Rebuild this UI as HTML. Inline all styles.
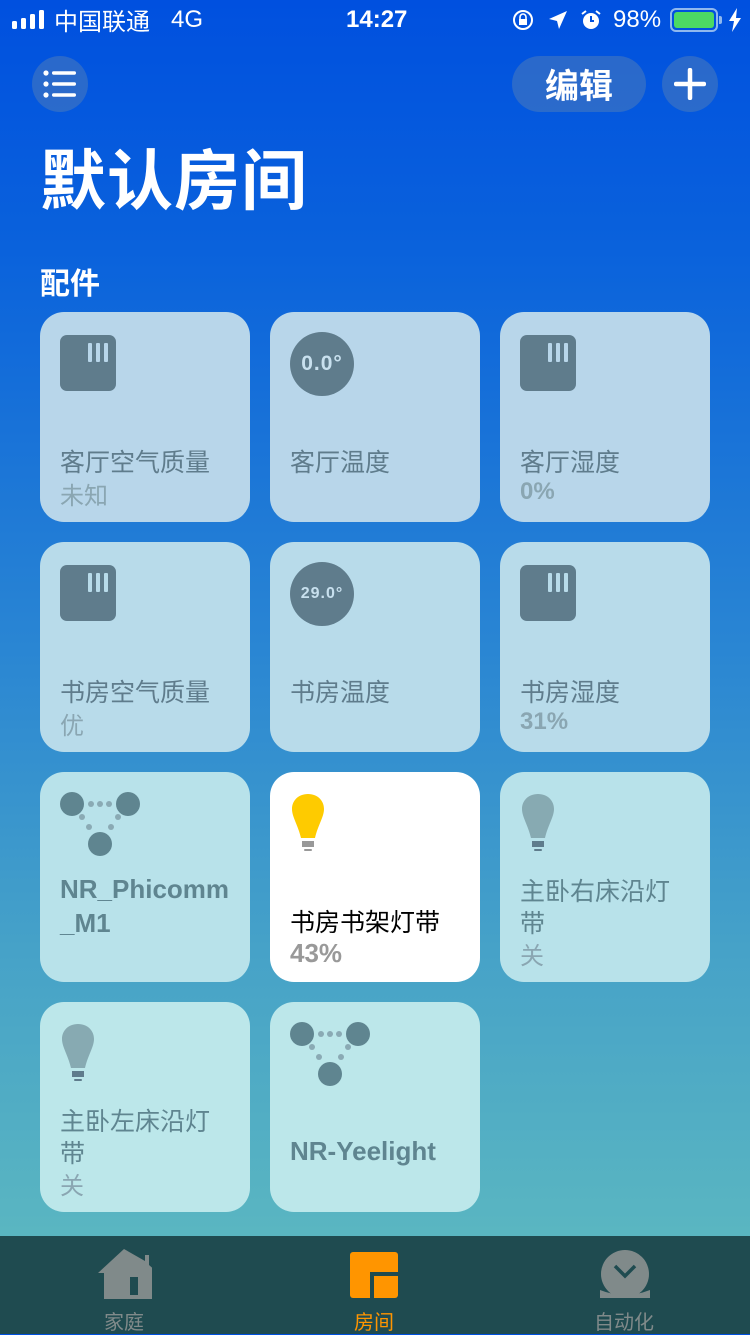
<!DOCTYPE html>
<html><head><meta charset="utf-8"><style>
*{margin:0;padding:0;box-sizing:border-box}
body{width:750px;height:1334px;overflow:hidden;position:relative;font-family:"Liberation Sans","Noto Sans CJK SC",sans-serif;background:linear-gradient(180deg,#0050df 0px,#0a62dc 250px,#2a86d3 650px,#46a2c8 950px,#5ab6c1 1236px)}
.sb{position:absolute;top:0;left:0;width:750px;height:40px;color:#fff;font-size:24px}
.sb span{position:absolute;top:6px}
.btn{position:absolute;background:rgba(90,130,180,0.45);border-radius:28px}
h1{position:absolute;left:40px;top:138px;line-height:76px;color:#fff;font-size:66px;font-weight:bold;font-family:"Noto Sans CJK SC",sans-serif;letter-spacing:1px}
.sec{position:absolute;left:40px;top:262px;line-height:38px;color:#fff;font-size:30px;font-weight:bold;font-family:"Noto Sans CJK SC",sans-serif}
.t{position:absolute;width:210px;height:210px;border-radius:24px;color:#5f7c8c;font-family:"Noto Sans CJK SC",sans-serif}
.t .n{position:absolute;left:20px;font-size:25px;line-height:32px}
.t .s{position:absolute;left:20px;font-size:24px;color:#8aa6b2}
.box{position:absolute;left:20px;top:23px;width:56px;height:56px;border-radius:7px;background:#5f7c8c}
.box i{position:absolute;top:8px;width:4px;height:19px;background:#b8d6ea;border-radius:1px}
.th{position:absolute;left:20px;top:20px;width:64px;height:64px;border-radius:50%;background:#5f7c8c;color:#c8e0ee;font-family:"Liberation Sans",sans-serif;text-align:center;line-height:64px;font-weight:bold;letter-spacing:1px}
.tab{position:absolute;top:1236px;left:0;width:750px;height:98px;background:#1f4b50}
.tab span{position:absolute;top:70px;font-size:20px;font-family:"Noto Sans CJK SC",sans-serif;transform:translateX(-50%)}
</style></head><body>
<div class="sb">
<svg style="position:absolute;left:12px;top:10px" width="34" height="20"><rect x="0" y="11" width="5" height="8" rx="1.5" fill="#fff"/><rect x="9" y="8" width="5" height="11" rx="1.5" fill="#fff"/><rect x="18" y="4" width="5" height="15" rx="1.5" fill="#fff"/><rect x="27" y="0" width="5" height="19" rx="1.5" fill="#fff"/></svg>
<span style="left:54px;font-family:'Noto Sans CJK SC',sans-serif;top:3px;line-height:34px">中国联通</span>
<span style="left:171px">4G</span>
<span style="left:346px;font-weight:bold">14:27</span>
<svg style="position:absolute;left:512px;top:9px" width="24" height="22"><circle cx="11" cy="11" r="9" fill="none" stroke="#fff" stroke-width="2"/><rect x="7" y="10" width="8" height="6" fill="#fff"/><path d="M8 10v-2a3 3 0 0 1 6 0v2" fill="none" stroke="#fff" stroke-width="1.6"/></svg>
<svg style="position:absolute;left:548px;top:10px" width="20" height="20"><path d="M19 1L1 9l8 2 2 8z" fill="#fff"/></svg>
<svg style="position:absolute;left:580px;top:9px" width="22" height="22"><circle cx="11" cy="12" r="8" fill="#fff"/><path d="M11 7v5h3" stroke="#0050df" stroke-width="2" fill="none"/><path d="M2 5l4-3M20 5l-4-3" stroke="#fff" stroke-width="2"/></svg>
<span style="left:613px">98%</span>
<div style="position:absolute;left:670px;top:8px;width:48px;height:24px;border:2px solid #8fb8ee;border-radius:6px;padding:2px"><div style="width:100%;height:100%;background:#4cd964;border-radius:3px"></div></div>
<div style="position:absolute;left:719px;top:16px;width:3px;height:8px;background:#8fb8ee;border-radius:0 2px 2px 0"></div>
<svg style="position:absolute;left:728px;top:8px" width="14" height="24"><path d="M9 0L1 13h5l-2 11 9-14H8z" fill="#fff"/></svg>
</div>
<div class="btn" style="left:32px;top:56px;width:56px;height:56px"></div>
<svg style="position:absolute;left:42px;top:70px" width="36" height="28"><g fill="#fff"><circle cx="4" cy="3" r="2.6"/><circle cx="4" cy="14" r="2.6"/><circle cx="4" cy="25" r="2.6"/><rect x="10" y="1.3" width="24" height="3.4" rx="1.7"/><rect x="10" y="12.3" width="24" height="3.4" rx="1.7"/><rect x="10" y="23.3" width="24" height="3.4" rx="1.7"/></g></svg>
<div class="btn" style="left:512px;top:56px;width:134px;height:56px;color:#fff;font-size:34px;font-weight:bold;text-align:center;line-height:56px;font-family:'Noto Sans CJK SC',sans-serif">编辑</div>
<div class="btn" style="left:662px;top:56px;width:56px;height:56px"></div>
<svg style="position:absolute;left:674px;top:68px" width="32" height="32"><path d="M16 2v28M2 16h28" stroke="#fff" stroke-width="4.5" stroke-linecap="round"/></svg>
<h1>默认房间</h1>
<div class="sec">配件</div>

<div class="t" style="left:40px;top:312px;background:#b8d6ea"><div class="box"><i style="left:28px"></i><i style="left:36px"></i><i style="left:44px"></i></div><div class="n" style="top:133px">客厅空气质量</div><div class="s" style="top:164px">未知</div></div>
<div class="t" style="left:270px;top:312px;background:#b8d6ea"><div class="th" style="font-size:21px">0.0°</div><div class="n" style="top:133px">客厅温度</div></div>
<div class="t" style="left:500px;top:312px;background:#b8d6ea"><div class="box"><i style="left:28px"></i><i style="left:36px"></i><i style="left:44px"></i></div><div class="n" style="top:133px">客厅湿度</div><div class="s" style="top:166px;font-family:'Liberation Sans',sans-serif;font-weight:bold;color:#8aa6b2">0%</div></div>

<div class="t" style="left:40px;top:542px;background:#b8dbea"><div class="box"><i style="left:28px;background:#b8dbea"></i><i style="left:36px;background:#b8dbea"></i><i style="left:44px;background:#b8dbea"></i></div><div class="n" style="top:133px">书房空气质量</div><div class="s" style="top:164px">优</div></div>
<div class="t" style="left:270px;top:542px;background:#b8dbea"><div class="th" style="font-size:16px">29.0°</div><div class="n" style="top:133px">书房温度</div></div>
<div class="t" style="left:500px;top:542px;background:#b8dbea"><div class="box"><i style="left:28px;background:#b8dbea"></i><i style="left:36px;background:#b8dbea"></i><i style="left:44px;background:#b8dbea"></i></div><div class="n" style="top:133px">书房湿度</div><div class="s" style="top:166px;font-family:'Liberation Sans',sans-serif;font-weight:bold">31%</div></div>

<div class="t" style="left:40px;top:772px;background:#b8e2ea">
<svg style="position:absolute;left:18px;top:18px" width="84" height="68"><g fill="#5f8590"><circle cx="14" cy="14" r="12"/><circle cx="70" cy="14" r="12"/><circle cx="42" cy="54" r="12"/></g><g fill="#8aaab4"><circle cx="33" cy="14" r="3"/><circle cx="42" cy="14" r="3"/><circle cx="51" cy="14" r="3"/><circle cx="24" cy="27" r="3"/><circle cx="31" cy="37" r="3"/><circle cx="60" cy="27" r="3"/><circle cx="53" cy="37" r="3"/></g></svg>
<div class="n" style="top:100px;font-family:'Liberation Sans',sans-serif;font-weight:bold;font-size:26px;line-height:34px;color:#5f8590">NR_Phicomm<br>_M1</div></div>
<div class="t" style="left:270px;top:772px;background:#fff">
<svg style="position:absolute;left:20px;top:22px" width="40" height="60"><path d="M18 0C8 0 2 7 2 15c0 8 6 16 9 29h14c3-13 9-21 9-29C34 7 28 0 18 0z" fill="#fecb00"/><rect x="12" y="47" width="12" height="6" fill="#999"/><rect x="14" y="55" width="8" height="2" rx="1" fill="#999"/></svg>
<div class="n" style="top:133px;color:#000">书房书架灯带</div><div class="s" style="top:166px;font-family:'Liberation Sans',sans-serif;font-weight:bold;color:#999;font-size:26px">43%</div></div>
<div class="t" style="left:500px;top:772px;background:#b8e2ea">
<svg style="position:absolute;left:20px;top:22px" width="40" height="60"><path d="M18 0C8 0 2 7 2 15c0 8 6 16 9 29h14c3-13 9-21 9-29C34 7 28 0 18 0z" fill="#87aab2"/><rect x="12" y="47" width="12" height="6" fill="#5f7c8c"/><rect x="14" y="55" width="8" height="2" rx="1" fill="#5f7c8c"/></svg>
<div class="n" style="top:102px;color:#5f8590">主卧右床沿灯<br>带</div><div class="s" style="top:164px">关</div></div>

<div class="t" style="left:40px;top:1002px;background:#bce7ea">
<svg style="position:absolute;left:20px;top:22px" width="40" height="60"><path d="M18 0C8 0 2 7 2 15c0 8 6 16 9 29h14c3-13 9-21 9-29C34 7 28 0 18 0z" fill="#87aab2"/><rect x="12" y="47" width="12" height="6" fill="#5f7c8c"/><rect x="14" y="55" width="8" height="2" rx="1" fill="#5f7c8c"/></svg>
<div class="n" style="top:102px;color:#5f8590">主卧左床沿灯<br>带</div><div class="s" style="top:164px">关</div></div>
<div class="t" style="left:270px;top:1002px;background:#bce7ea">
<svg style="position:absolute;left:18px;top:18px" width="84" height="68"><g fill="#5f8590"><circle cx="14" cy="14" r="12"/><circle cx="70" cy="14" r="12"/><circle cx="42" cy="54" r="12"/></g><g fill="#8aaab4"><circle cx="33" cy="14" r="3"/><circle cx="42" cy="14" r="3"/><circle cx="51" cy="14" r="3"/><circle cx="24" cy="27" r="3"/><circle cx="31" cy="37" r="3"/><circle cx="60" cy="27" r="3"/><circle cx="53" cy="37" r="3"/></g></svg>
<div class="n" style="top:133px;font-family:'Liberation Sans',sans-serif;font-weight:bold;font-size:26px;color:#5f8590">NR-Yeelight</div></div>

<div class="tab">
<svg style="position:absolute;left:96px;top:13px" width="56" height="50"><path d="M28 0L2 24h6v26h48V24h6L53 16V6h-4v6z" fill="#808a8a"/><rect x="34" y="28" width="8" height="18" fill="#1f4b50"/></svg>
<svg style="position:absolute;left:350px;top:16px" width="48" height="48"><rect x="0" y="0" width="48" height="46" rx="3" fill="#ff9500"/><path d="M22 46V22h26" stroke="#1f4b50" stroke-width="4" fill="none"/></svg>
<svg style="position:absolute;left:600px;top:14px" width="50" height="48"><ellipse cx="25" cy="24" rx="24" ry="24" fill="#808a8a"/><path d="M15 16l10 10 10-10" stroke="#1f4b50" stroke-width="3.5" fill="none"/><path d="M0 40q25 10 50 0v8H0z" fill="#808a8a"/></svg>
<span style="left:124px;color:#808a8a">家庭</span>
<span style="left:374px;color:#ff9500">房间</span>
<span style="left:624px;color:#808a8a">自动化</span>
</div>
</body></html>
